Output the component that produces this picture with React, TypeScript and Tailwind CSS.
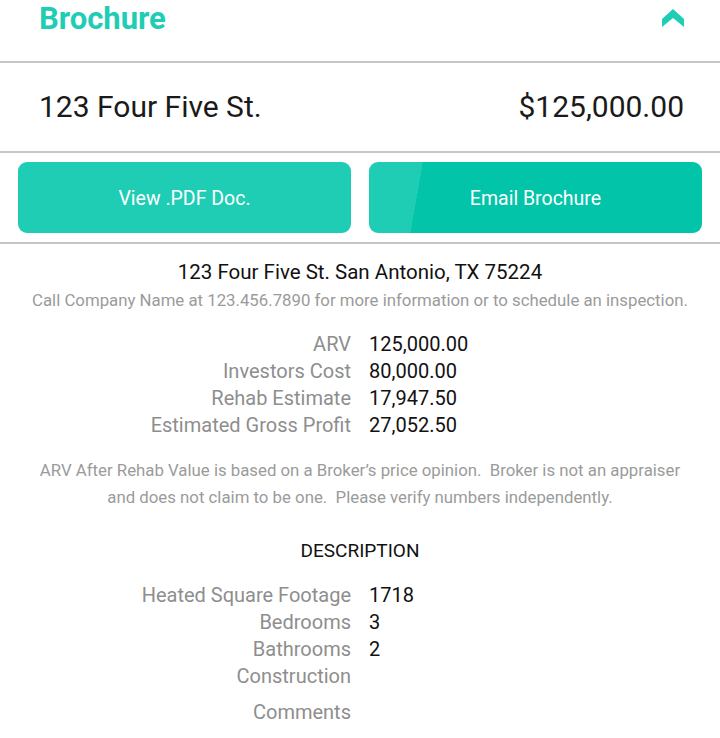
import React from "react";

const font = { fontFamily: "Roboto, 'Noto Sans', sans-serif" };

function Row({ label, value, extra }: { label: string; value?: string; extra?: string }) {
  return (
    <div className={`grid grid-cols-2 gap-x-[18px] leading-[27px] ${extra ?? ""}`}>
      <div className="text-right text-[#8e8e8e]">{label}</div>
      <div className="text-[#111]">{value ?? ""}</div>
    </div>
  );
}

export default function App() {
  return (
    <div className="w-[720px] h-[738px] bg-white overflow-hidden" style={font}>
      {/* header */}
      <div className="h-[61px] flex items-start justify-between pl-[39px] pr-[36px]">
        <div className="text-[31px] font-bold text-[#1fcdb5] leading-[37px]">Brochure</div>
        <svg width="22" height="18" viewBox="0 0 22 18" className="mt-[9px]">
          <polygon points="0,10 11,0 22,10 22,18 11,9 0,18" fill="#1fcdb5" />
        </svg>
      </div>
      <div className="h-[2px] bg-[#c6c6c6]" />
      {/* title row */}
      <div className="h-[88px] flex items-center justify-between pl-[39px] pr-[36px] pb-[2px] text-[30px] text-[#1a1a1a]">
        <span>123 Four Five St.</span>
        <span>$125,000.00</span>
      </div>
      <div className="h-[2px] bg-[#c6c6c6]" />
      {/* buttons */}
      <div className="grid grid-cols-2 gap-x-[18px] px-[18px] py-[9px]">
        <button className="h-[71px] pt-[3px] rounded-[9px] bg-[#1fcdb5] text-white text-[19.5px]">View .PDF Doc.</button>
        <button className="h-[71px] pt-[3px] rounded-[9px] bg-[linear-gradient(100deg,#1fcdb5_0,#1fcdb5_15.6%,#02c4a9_15.6%,#02c4a9_100%)] text-white text-[19.5px]">
          Email Brochure
        </button>
      </div>
      <div className="h-[2px] bg-[#c6c6c6]" />
      {/* body */}
      <div className="pt-[14px] text-center">
        <div className="text-[20.5px] leading-[28px] text-[#111]">123 Four Five St. San Antonio, TX 75224</div>
        <div className="text-[16.8px] leading-[28px] text-[#9b9b9b]">
          Call Company Name at 123.456.7890 for more information or to schedule an inspection.
        </div>
      </div>
      <div className="mt-[17px] text-[20px]">
        <Row label="ARV" value="125,000.00" />
        <Row label="Investors Cost" value="80,000.00" />
        <Row label="Rehab Estimate" value="17,947.50" />
        <Row label="Estimated Gross Profit" value="27,052.50" />
      </div>
      <div className="mt-[18px] text-center text-[16.8px] leading-[27px] text-[#9b9b9b] whitespace-pre">
        {"ARV After Rehab Value is based on a Broker\u2019s price opinion.  Broker is not an appraiser"}
        <br />
        {"and does not claim to be one.  Please verify numbers independently."}
      </div>
      <div className="mt-[26px] text-center text-[19px] leading-[27px] text-[#111]">DESCRIPTION</div>
      <div className="mt-[18px] text-[20px]">
        <Row label="Heated Square Footage" value="1718" />
        <Row label="Bedrooms" value="3" />
        <Row label="Bathrooms" value="2" />
        <Row label="Construction" extra="h-[36px]" />
        <Row label="Comments" />
      </div>
    </div>
  );
}
